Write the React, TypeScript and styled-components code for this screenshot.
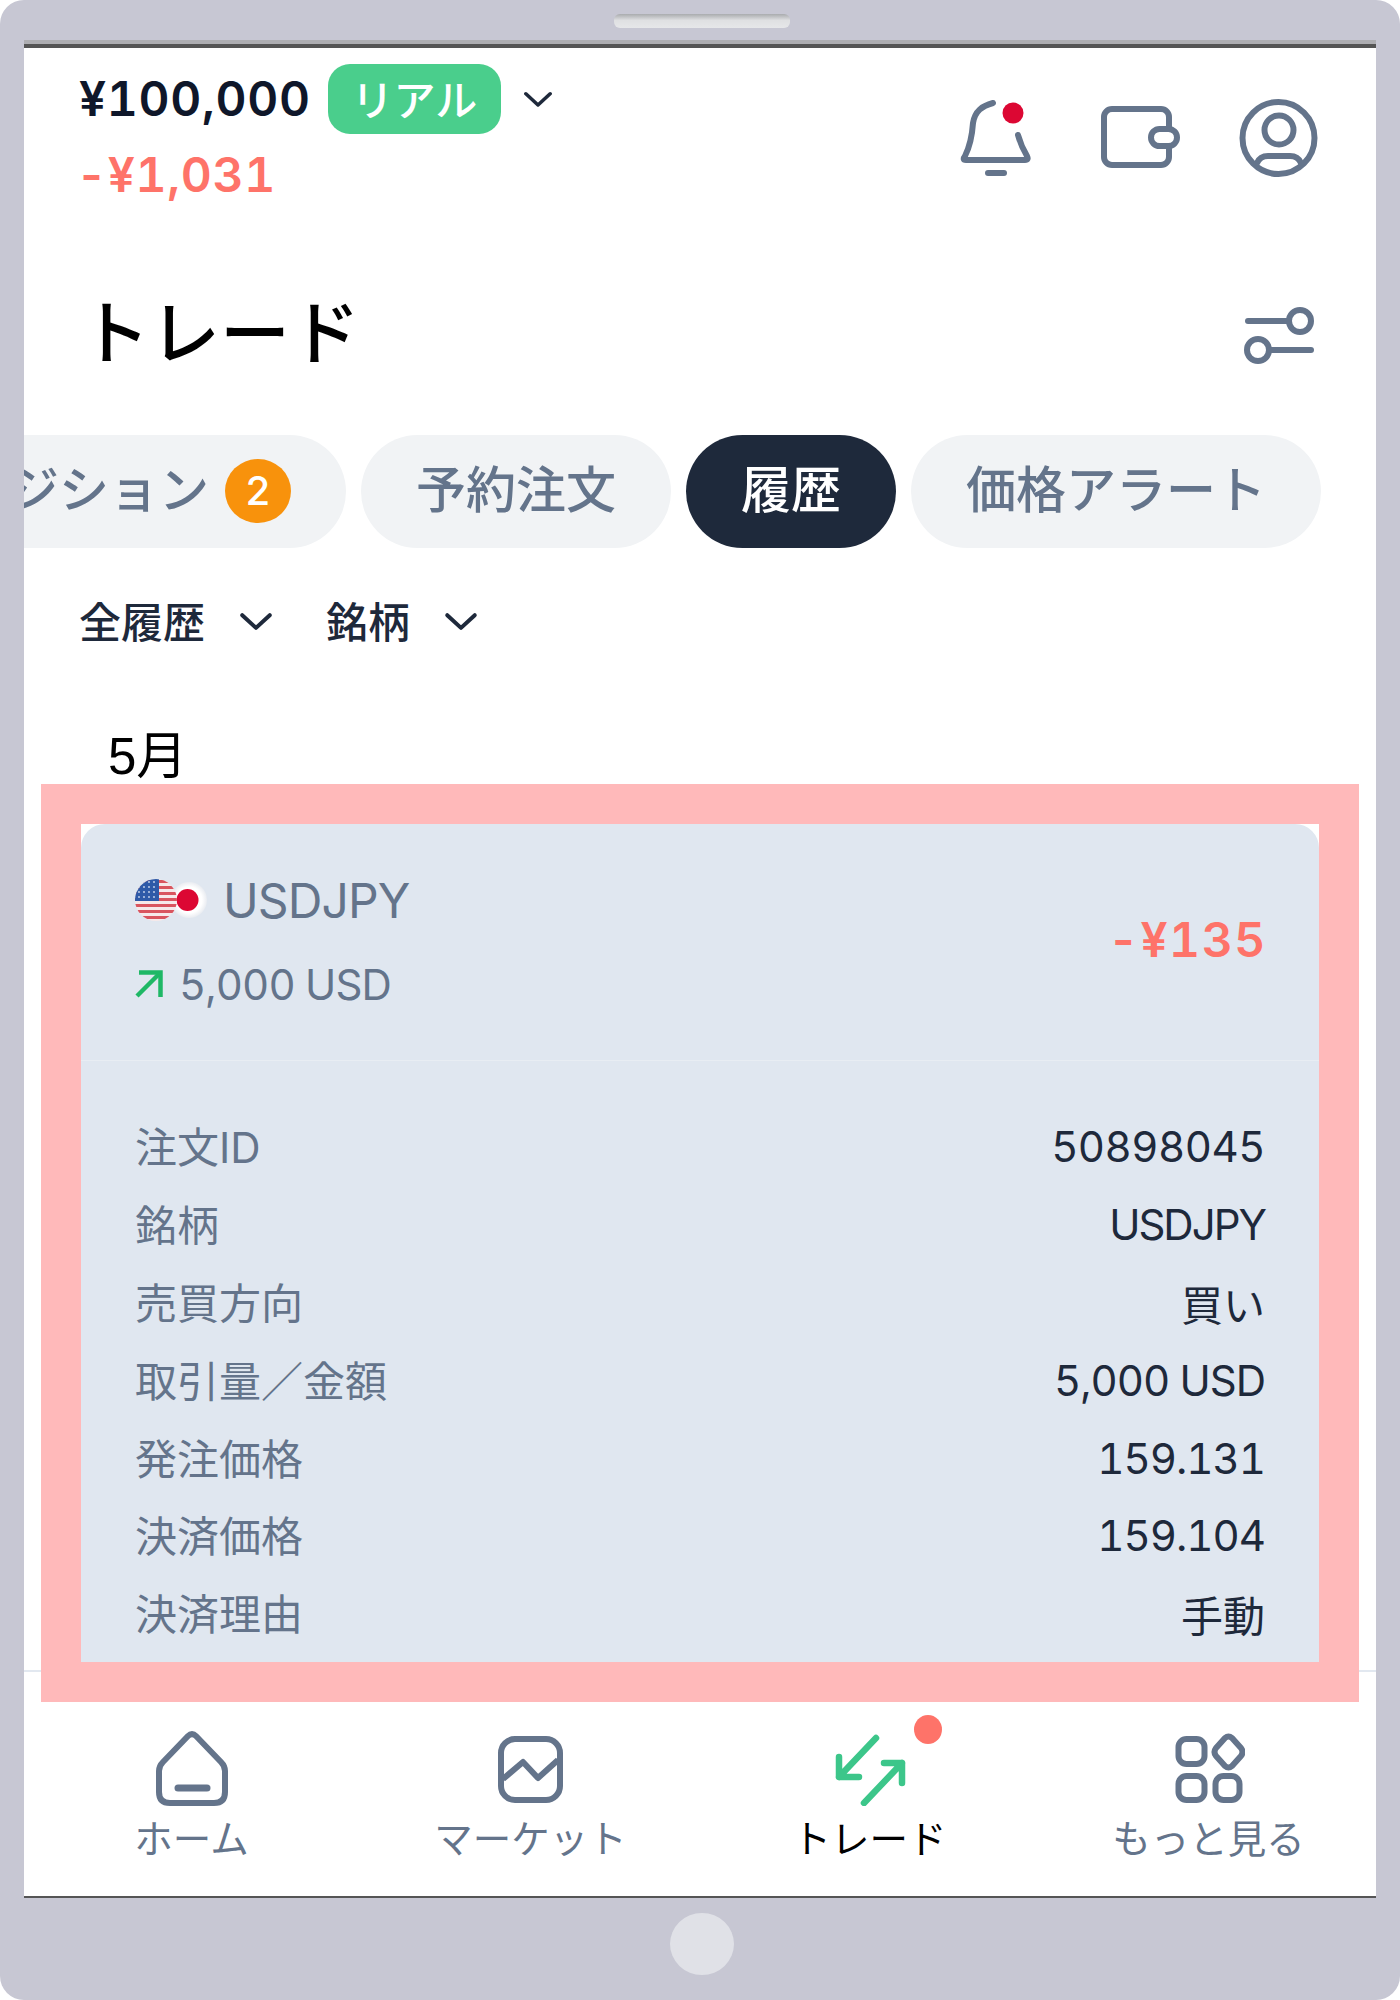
import React from 'react'
import styled, {createGlobalStyle} from 'styled-components'

const GlobalStyle = createGlobalStyle`
    html, body {
        margin: 0;
        padding: 0;
        background: #fff;
    }
    body {
        font-family: Inter, "Noto Sans CJK JP", sans-serif;
        font-variant-numeric: tabular-nums;
    }
`

const ICON = '#64748b'
const CORAL = '#fe7369'
const NAVY = '#1e293b'

const Device = styled.div`
    width: 1400px;
    height: 2000px;
    background: #c7c7d3;
    border-radius: 24px;
    display: flex;
    flex-direction: column;
    align-items: center;
    overflow: hidden;
`

const Speaker = styled.div`
    width: 176px;
    height: 14px;
    margin: 14px 0 0 3px;
    border-radius: 6px;
    background: linear-gradient(#a9abae, #dfe0e2 45%, #e6e7e9);
`

const Screen = styled.div`
    width: 1352px;
    height: 1848px;
    margin-top: 16px;
    background: #fff;
    border-top: 4px solid #555;
    border-bottom: 2px solid #555;
    box-shadow: 0 -4px 0 #aeaeb2;
    display: flex;
    flex-direction: column;
    overflow: hidden;
`

const HomeButton = styled.div`
    width: 64px;
    height: 62px;
    margin: 15px 0 0 4px;
    border-radius: 50%;
    background: #e0e1e7;
`

const Header = styled.header`
    height: 152px;
    display: flex;
    justify-content: space-between;
    padding: 16px 58px 0 55px;
    box-sizing: border-box;
    flex-shrink: 0;
`

const BalanceRow = styled.div`
    height: 70px;
    display: flex;
    align-items: center;
`

const Amount = styled.span`
    font-size: 48px;
    font-weight: 600;
    line-height: 46px;
    letter-spacing: 0.7px;
    color: #0f172a;
`

const AccountBadge = styled.span`
    width: 173px;
    height: 70px;
    margin-left: 17px;
    padding-bottom: 4px;
    box-sizing: border-box;
    border-radius: 22px;
    background: #4ace8c;
    color: #fff;
    font-size: 42px;
    font-weight: 500;
    display: flex;
    align-items: center;
    justify-content: center;
`

const CaretSlot = styled.span`
    margin-left: 22px;
`

const LossText = styled.div`
    margin: 18px 0 0 -3px;
    font-size: 48px;
    font-weight: 600;
    line-height: 46px;
    letter-spacing: 0.7px;
    color: ${CORAL};
`

const HeaderIcons = styled.div`
    display: flex;
    gap: 52px;
    padding-top: 32px;
`

const TitleRow = styled.div`
    height: 130px;
    margin-top: 70px;
    margin-bottom: 35px;
    padding: 0 62px 0 56px;
    display: flex;
    align-items: center;
    justify-content: space-between;
    flex-shrink: 0;
`

const Title = styled.h1`
    margin: 0 0 14px;
    font-size: 70px;
    font-weight: 500;
    color: #000;
`

const TabStrip = styled.div`
    height: 113px;
    padding-right: 55px;
    display: flex;
    justify-content: flex-end;
    gap: 15px;
    flex-shrink: 0;
`

const Tab = styled.div<{$active?: boolean}>`
    height: 113px;
    padding: 0 55px 12px;
    box-sizing: border-box;
    flex-shrink: 0;
    display: flex;
    align-items: center;
    gap: 16px;
    border-radius: 57px;
    background: ${props => props.$active ? NAVY : '#f1f3f5'};
    color: ${props => props.$active ? '#fff' : ICON};
    font-size: 50px;
    font-weight: 500;
`

const CountBadge = styled.span`
    width: 66px;
    height: 64px;
    margin-top: 10px;
    border-radius: 50%;
    background: #f8920c;
    color: #fff;
    font-size: 40px;
    font-weight: 500;
    display: flex;
    align-items: center;
    justify-content: center;
`

const FilterBar = styled.div`
    height: 146px;
    padding: 0 0 4px 55px;
    box-sizing: border-box;
    display: flex;
    align-items: center;
    gap: 53px;
    flex-shrink: 0;
`

const Filter = styled.div`
    display: flex;
    align-items: center;
    gap: 34px;
    font-size: 42px;
    font-weight: 500;
    color: ${NAVY};
`

const FilterCaret = styled.span`
    padding-top: 5px;
`

const MonthLabel = styled.div`
    height: 90px;
    padding: 40px 0 0 84px;
    box-sizing: border-box;
    font-family: "Liberation Sans", "Noto Sans CJK JP", sans-serif;
    font-size: 51px;
    line-height: 46px;
    color: #000;
    flex-shrink: 0;
`

const HighlightFrame = styled.div`
    position: relative;
    z-index: 1;
    height: 918px;
    margin: 0 17px -32px;
    box-sizing: border-box;
    border: 40px solid #ffb9ba;
    background: #fff;
    flex-shrink: 0;
`

const OrderCard = styled.section`
    height: 100%;
    background: #e0e7f0;
    border-radius: 24px 24px 0 0;
    overflow: hidden;
`

const CardHeader = styled.div`
    height: 237px;
    padding: 0 54px;
    box-sizing: border-box;
    border-bottom: 1px solid #e8edf3;
    display: flex;
    align-items: center;
    justify-content: space-between;
`

const Summary = styled.div`
    display: flex;
    flex-direction: column;
    gap: 38px;
`

const SummaryRow = styled.div`
    height: 46px;
    display: flex;
    align-items: center;
`

const Symbol = styled.span`
    margin-left: 16px;
    font-size: 48px;
    letter-spacing: -0.9px;
    color: ${ICON};
`

const Volume = styled.span`
    margin-left: 16px;
    font-size: 42px;
    letter-spacing: -0.9px;
    color: ${ICON};
`

const Profit = styled.span`
    margin: 0 -2px 6px 0;
    font-size: 48px;
    font-weight: 600;
    letter-spacing: 1.6px;
    color: ${CORAL};
`

const Details = styled.div`
    padding: 47px 54px 0;
`

const DetailRow = styled.div`
    height: 77.8px;
    display: flex;
    align-items: center;
    justify-content: space-between;
    font-size: 42px;
`

const DetailLabel = styled.span`
    margin-bottom: 4px;
    color: ${ICON};
`

const DetailValue = styled.span<{$tight: number}>`
    letter-spacing: ${props => props.$tight}px;
    color: ${NAVY};
`

const BottomNav = styled.nav`
    height: 226px;
    box-sizing: border-box;
    border-top: 2px solid #e2e8f0;
    display: grid;
    grid-template-columns: repeat(4, 339px);
    justify-content: center;
    flex-shrink: 0;
`

const NavItem = styled.div<{$active?: boolean}>`
    padding-top: 58px;
    display: flex;
    flex-direction: column;
    align-items: center;
    gap: 13px;
    font-size: 38.5px;
    line-height: 40px;
    color: ${props => props.$active ? '#000' : ICON};
`

const NavIconBox = styled.div`
    position: relative;
    width: 72px;
    height: 76px;
`

const NavDot = styled.span`
    position: absolute;
    left: 80px;
    top: -15px;
    width: 28px;
    height: 29px;
    border-radius: 50%;
    background: ${CORAL};
`

const Line = styled.svg`
    display: block;
    fill: none;
    stroke: ${ICON};
    stroke-width: 6;
    stroke-linecap: round;
    stroke-linejoin: round;
`

const Chevron = ({size = 32}: {size?: number}) => (
    <Line width={size} height={size * 0.56} viewBox="0 0 32 18" style={{stroke: NAVY, strokeWidth: 3.8}}>
        <path d="M3 3 L16 15 L29 3"/>
    </Line>
)

const BellIcon = () => (
    <Line width={80} height={88} viewBox="0 0 80 88">
        <path d="M33 7 C22 10 15 15 13 27 C12 42 10 50 5 60 Q2 64 6 64 H65 Q69 64 67 60 Q61 50 58 39"/>
        <path d="M28 77 H44"/>
        <circle cx="53" cy="17" r="10.5" fill="#dc0733" stroke="none"/>
    </Line>
)

const WalletIcon = () => (
    <Line width={94} height={88} viewBox="0 0 94 88">
        <rect x="12" y="13" width="65" height="56" rx="8"/>
        <rect x="59" y="33" width="26" height="17" rx="8.5" fill="#fff"/>
    </Line>
)

const UserIcon = () => (
    <Line width={80} height={88} viewBox="0 0 80 88">
        <circle cx="40.5" cy="42" r="36"/>
        <circle cx="41" cy="34" r="14.5"/>
        <path d="M19 67 Q22 60 30 60 H52 Q60 60 63 67"/>
    </Line>
)

const SliderIcon = () => (
    <Line width={70} height={58} viewBox="0 0 70 58">
        <path d="M4 15 H44"/>
        <circle cx="56" cy="15" r="11"/>
        <circle cx="14" cy="44" r="11"/>
        <path d="M26 44 H67"/>
    </Line>
)

const HomeIcon = () => (
    <Line width={72} height={76} viewBox="0 0 72 76">
        <path d="M32 6 Q36 2 40 6 L65 32 Q69 36 69 41 V62 Q69 73 58 73 H14 Q3 73 3 62 V41 Q3 36 7 32 Z"/>
        <path d="M22 58 H51" strokeWidth="7"/>
    </Line>
)

const MarketIcon = () => (
    <Line width={72} height={76} viewBox="0 0 72 76">
        <rect x="6" y="9" width="59" height="61" rx="14"/>
        <path d="M8 49 L28 32 L43 48 L63 30" strokeLinecap="butt"/>
    </Line>
)

const TradeIcon = () => (
    <Line width={72} height={76} viewBox="0 0 72 76" style={{stroke: '#3cc68a', strokeWidth: 6.5}}>
        <path d="M42 8 L5 47 M5 27 V47 H25"/>
        <path d="M30 73 L68 33 M50 33 H68 V53"/>
    </Line>
)

const MoreIcon = () => (
    <Line width={72} height={76} viewBox="0 0 72 76">
        <rect x="5.5" y="9" width="26" height="25" rx="8"/>
        <path d="M52 8 Q55.5 5 59 8 L68 18 Q71 22 68 26 L59 36 Q55.5 39 52 36 L43 26 Q40 22 43 18 Z"/>
        <rect x="5.5" y="46" width="26" height="24" rx="8"/>
        <rect x="42.5" y="46" width="24" height="24" rx="8"/>
    </Line>
)

const PairFlags = () => (
    <svg width={72} height={42} viewBox="0 0 72 42" style={{display: 'block'}}>
        <defs>
            <clipPath id="usClip">
                <circle cx="21" cy="21" r="21"/>
            </clipPath>
            <radialGradient id="jpGlow">
                <stop offset="0.72" stopColor="#fff"/>
                <stop offset="1" stopColor="#e9ecf1"/>
            </radialGradient>
        </defs>
        <circle cx="54" cy="21" r="18" fill="url(#jpGlow)"/>
        <circle cx="52.5" cy="21" r="11" fill="#dc0733"/>
        <g clipPath="url(#usClip)">
            <rect width="42" height="42" fill="#f6e9ea"/>
            {[0, 6, 12, 18, 24, 30, 36].map((y) => (
                <rect key={y} y={y + 1} width="42" height="3" fill="#d9555f"/>
            ))}
            <rect width="24" height="22" fill="#2e5aa8"/>
            {[3, 8, 13, 18].map((y) => [3, 8, 13, 18].map((x) => (
                <circle key={`${x}-${y}`} cx={x + 1} cy={y} r="0.9" fill="#cdd9ee"/>
            )))}
        </g>
    </svg>
)

const BuyArrow = () => (
    <svg width={28} height={28} viewBox="0 0 28 28" style={{display: 'block', fill: 'none', stroke: '#1fb866', strokeWidth: 4.5}}>
        <path d="M2 26 L25 3"/>
        <path d="M4 2.5 H25.5 V27"/>
    </svg>
)

const detailRows: [string, string, number][] = [
    ['注文ID', '50898045', -0.5],
    ['銘柄', 'USDJPY', -2],
    ['売買方向', '買い', 0],
    ['取引量／金額', '5,000 USD', -1],
    ['発注価格', '159.131', -1],
    ['決済価格', '159.104', -1],
    ['決済理由', '手動', 0],
]

const App = () => {
    return (
        <Device>
            <GlobalStyle/>
            <Speaker/>
            <Screen>
                <Header>
                    <div>
                        <BalanceRow>
                            <Amount>¥100,000</Amount>
                            <AccountBadge>リアル</AccountBadge>
                            <CaretSlot><Chevron size={30}/></CaretSlot>
                        </BalanceRow>
                        <LossText>-¥1,031</LossText>
                    </div>
                    <HeaderIcons>
                        <BellIcon/>
                        <WalletIcon/>
                        <UserIcon/>
                    </HeaderIcons>
                </Header>

                <TitleRow>
                    <Title>トレード</Title>
                    <SliderIcon/>
                </TitleRow>

                <TabStrip>
                    <Tab>ポジション<CountBadge>2</CountBadge></Tab>
                    <Tab>予約注文</Tab>
                    <Tab $active>履歴</Tab>
                    <Tab>価格アラート</Tab>
                </TabStrip>

                <FilterBar>
                    <Filter>全履歴<FilterCaret><Chevron size={34}/></FilterCaret></Filter>
                    <Filter>銘柄<FilterCaret><Chevron size={34}/></FilterCaret></Filter>
                </FilterBar>

                <MonthLabel>5月</MonthLabel>

                <HighlightFrame>
                    <OrderCard>
                        <CardHeader>
                            <Summary>
                                <SummaryRow>
                                    <PairFlags/>
                                    <Symbol>USDJPY</Symbol>
                                </SummaryRow>
                                <SummaryRow>
                                    <BuyArrow/>
                                    <Volume>5,000 USD</Volume>
                                </SummaryRow>
                            </Summary>
                            <Profit>-¥135</Profit>
                        </CardHeader>
                        <Details>
                            {detailRows.map(([label, value, tight]) => (
                                <DetailRow key={label}>
                                    <DetailLabel>{label}</DetailLabel>
                                    <DetailValue $tight={tight}>{value}</DetailValue>
                                </DetailRow>
                            ))}
                        </Details>
                    </OrderCard>
                </HighlightFrame>

                <BottomNav>
                    <NavItem>
                        <NavIconBox><HomeIcon/></NavIconBox>
                        ホーム
                    </NavItem>
                    <NavItem>
                        <NavIconBox><MarketIcon/></NavIconBox>
                        マーケット
                    </NavItem>
                    <NavItem $active>
                        <NavIconBox><TradeIcon/><NavDot/></NavIconBox>
                        トレード
                    </NavItem>
                    <NavItem>
                        <NavIconBox><MoreIcon/></NavIconBox>
                        もっと見る
                    </NavItem>
                </BottomNav>
            </Screen>
            <HomeButton/>
        </Device>
    )
}

export default App
